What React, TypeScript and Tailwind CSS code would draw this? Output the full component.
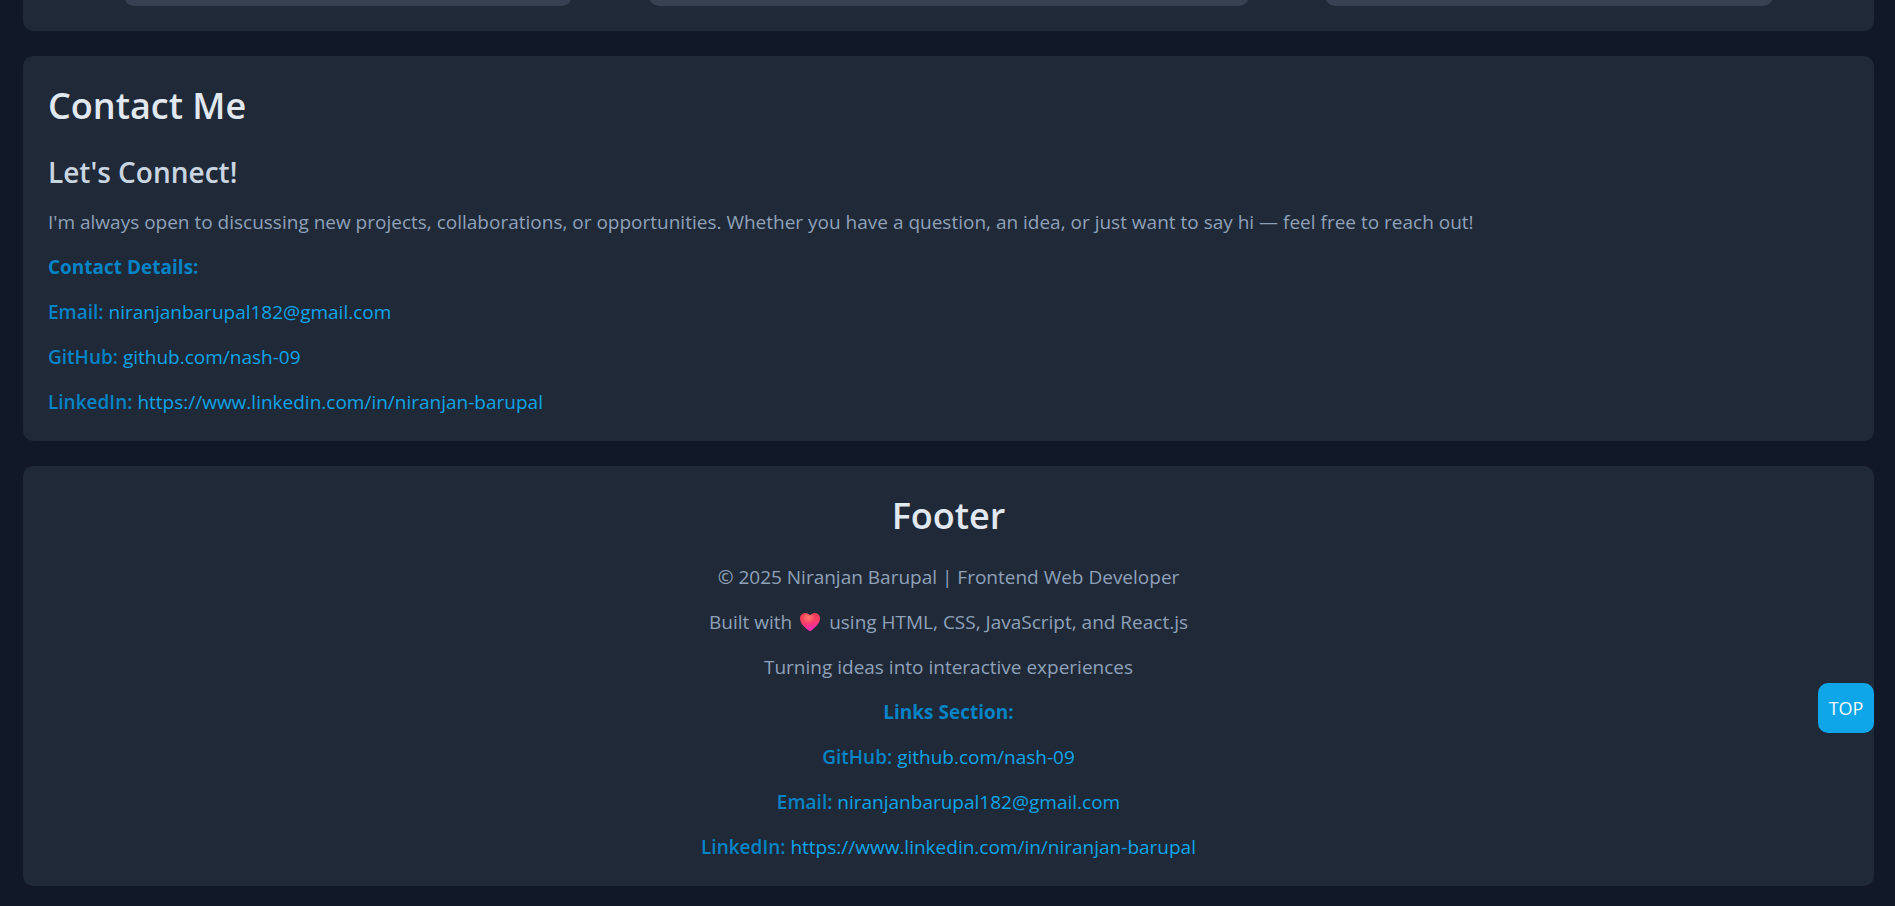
import type { ReactNode } from "react";

const links = {
  email: { label: "Email:", text: "niranjanbarupal182@gmail.com", href: "mailto:niranjanbarupal182@gmail.com" },
  github: { label: "GitHub:", text: "github.com/nash-09", href: "https://github.com/nash-09" },
  linkedin: {
    label: "LinkedIn:",
    text: "https://www.linkedin.com/in/niranjan-barupal",
    href: "https://www.linkedin.com/in/niranjan-barupal",
  },
};

function Title({ children }: { children: ReactNode }) {
  return <h2 className="text-[36px] leading-[50px] font-semibold text-slate-200">{children}</h2>;
}

function LinkLine({ item }: { item: { label: string; text: string; href: string } }) {
  return (
    <p>
      <span className="font-semibold text-[#0284c7]">{item.label}</span>{" "}
      <a href={item.href} className="text-[#0ea5e9]">{item.text}</a>
    </p>
  );
}

function Heart() {
  const shape =
    "M10 2.6C11 .9 12.8 0 14.8 0 17.8 0 20 2.3 20 5.4c0 4.700-4.300 8.500-8.600 12.100a2.200 2.200 0 0 1-2.800 0C4.300 13.900 0 10.100 0 5.400 0 2.300 2.200 0 5.200 0 7.200 0 9 .9 10 2.600z";
  return (
    <svg viewBox="0 0 20 18" className="mr-[9px] ml-2 inline-block h-[18px] w-5 align-[-2px]" role="img" aria-label="love">
      <defs>
        <linearGradient id="heart" x1="0" y1="0" x2="0.2" y2="1">
          <stop offset="0" stopColor="#f8394b" />
          <stop offset="0.5" stopColor="#fb3f62" />
          <stop offset="1" stopColor="#f72bb0" />
        </linearGradient>
        <radialGradient id="shine" cx="0.42" cy="0.25" r="0.35">
          <stop offset="0" stopColor="#ff7a70" />
          <stop offset="1" stopColor="#ff7a70" stopOpacity="0" />
        </radialGradient>
      </defs>
      <path d={shape} fill="url(#heart)" />
      <path d={shape} fill="url(#shine)" />
    </svg>
  );
}

export default function App() {
  return (
    <div className="flex min-h-screen flex-col gap-[25px] bg-[#111827] pr-[21px] pb-5 pl-[23px] font-['Open_Sans','Noto_Sans',sans-serif] text-[19px] leading-[30px] text-slate-400">
      <section className="flex justify-evenly overflow-hidden rounded-b-[10px] bg-[#1f2937] px-[25px] pb-[25px]">
        <div className="-mt-[34px] h-10 w-[448px] rounded-[10px] bg-[#374151]" />
        <div className="-mt-[34px] h-10 w-[600px] rounded-[10px] bg-[#374151]" />
        <div className="-mt-[34px] h-10 w-[448px] rounded-[10px] bg-[#374151]" />
      </section>

      <section className="rounded-[10px] bg-[#1f2937] px-[25px] pt-[25px] pb-6">
        <Title>Contact Me</Title>
        <h3 className="mt-[21px] mb-[15px] text-[28px] leading-[40px] font-semibold text-slate-300">Let's Connect!</h3>
        <div className="flex flex-col gap-[15px]">
          <p>
            I'm always open to discussing new projects, collaborations, or opportunities. Whether you have a question, an
            idea, or just want to say hi — feel free to reach out!
          </p>
          <p className="font-bold text-[#0284c7]">Contact Details:</p>
          <LinkLine item={links.email} />
          <LinkLine item={links.github} />
          <LinkLine item={links.linkedin} />
        </div>
      </section>

      <footer className="rounded-[10px] bg-[#1f2937] px-[25px] pt-[25px] pb-6 text-center">
        <Title>Footer</Title>
        <div className="mt-[21px] flex flex-col gap-[15px]">
          <p>© 2025 Niranjan Barupal | Frontend Web Developer</p>
          <p>
            Built with
            <Heart />
            using HTML, CSS, JavaScript, and React.js
          </p>
          <p>Turning ideas into interactive experiences</p>
          <p className="font-bold text-[#0284c7]">Links Section:</p>
          <LinkLine item={links.github} />
          <LinkLine item={links.email} />
          <LinkLine item={links.linkedin} />
        </div>
      </footer>

      <button
        type="button"
        onClick={() => window.scrollTo({ top: 0, behavior: "smooth" })}
        className="fixed right-[21px] bottom-[173px] min-w-14 rounded-[10px] bg-[#0ea5e9] px-2 py-2.5 text-[18px] text-slate-50"
      >
        TOP
      </button>
    </div>
  );
}
